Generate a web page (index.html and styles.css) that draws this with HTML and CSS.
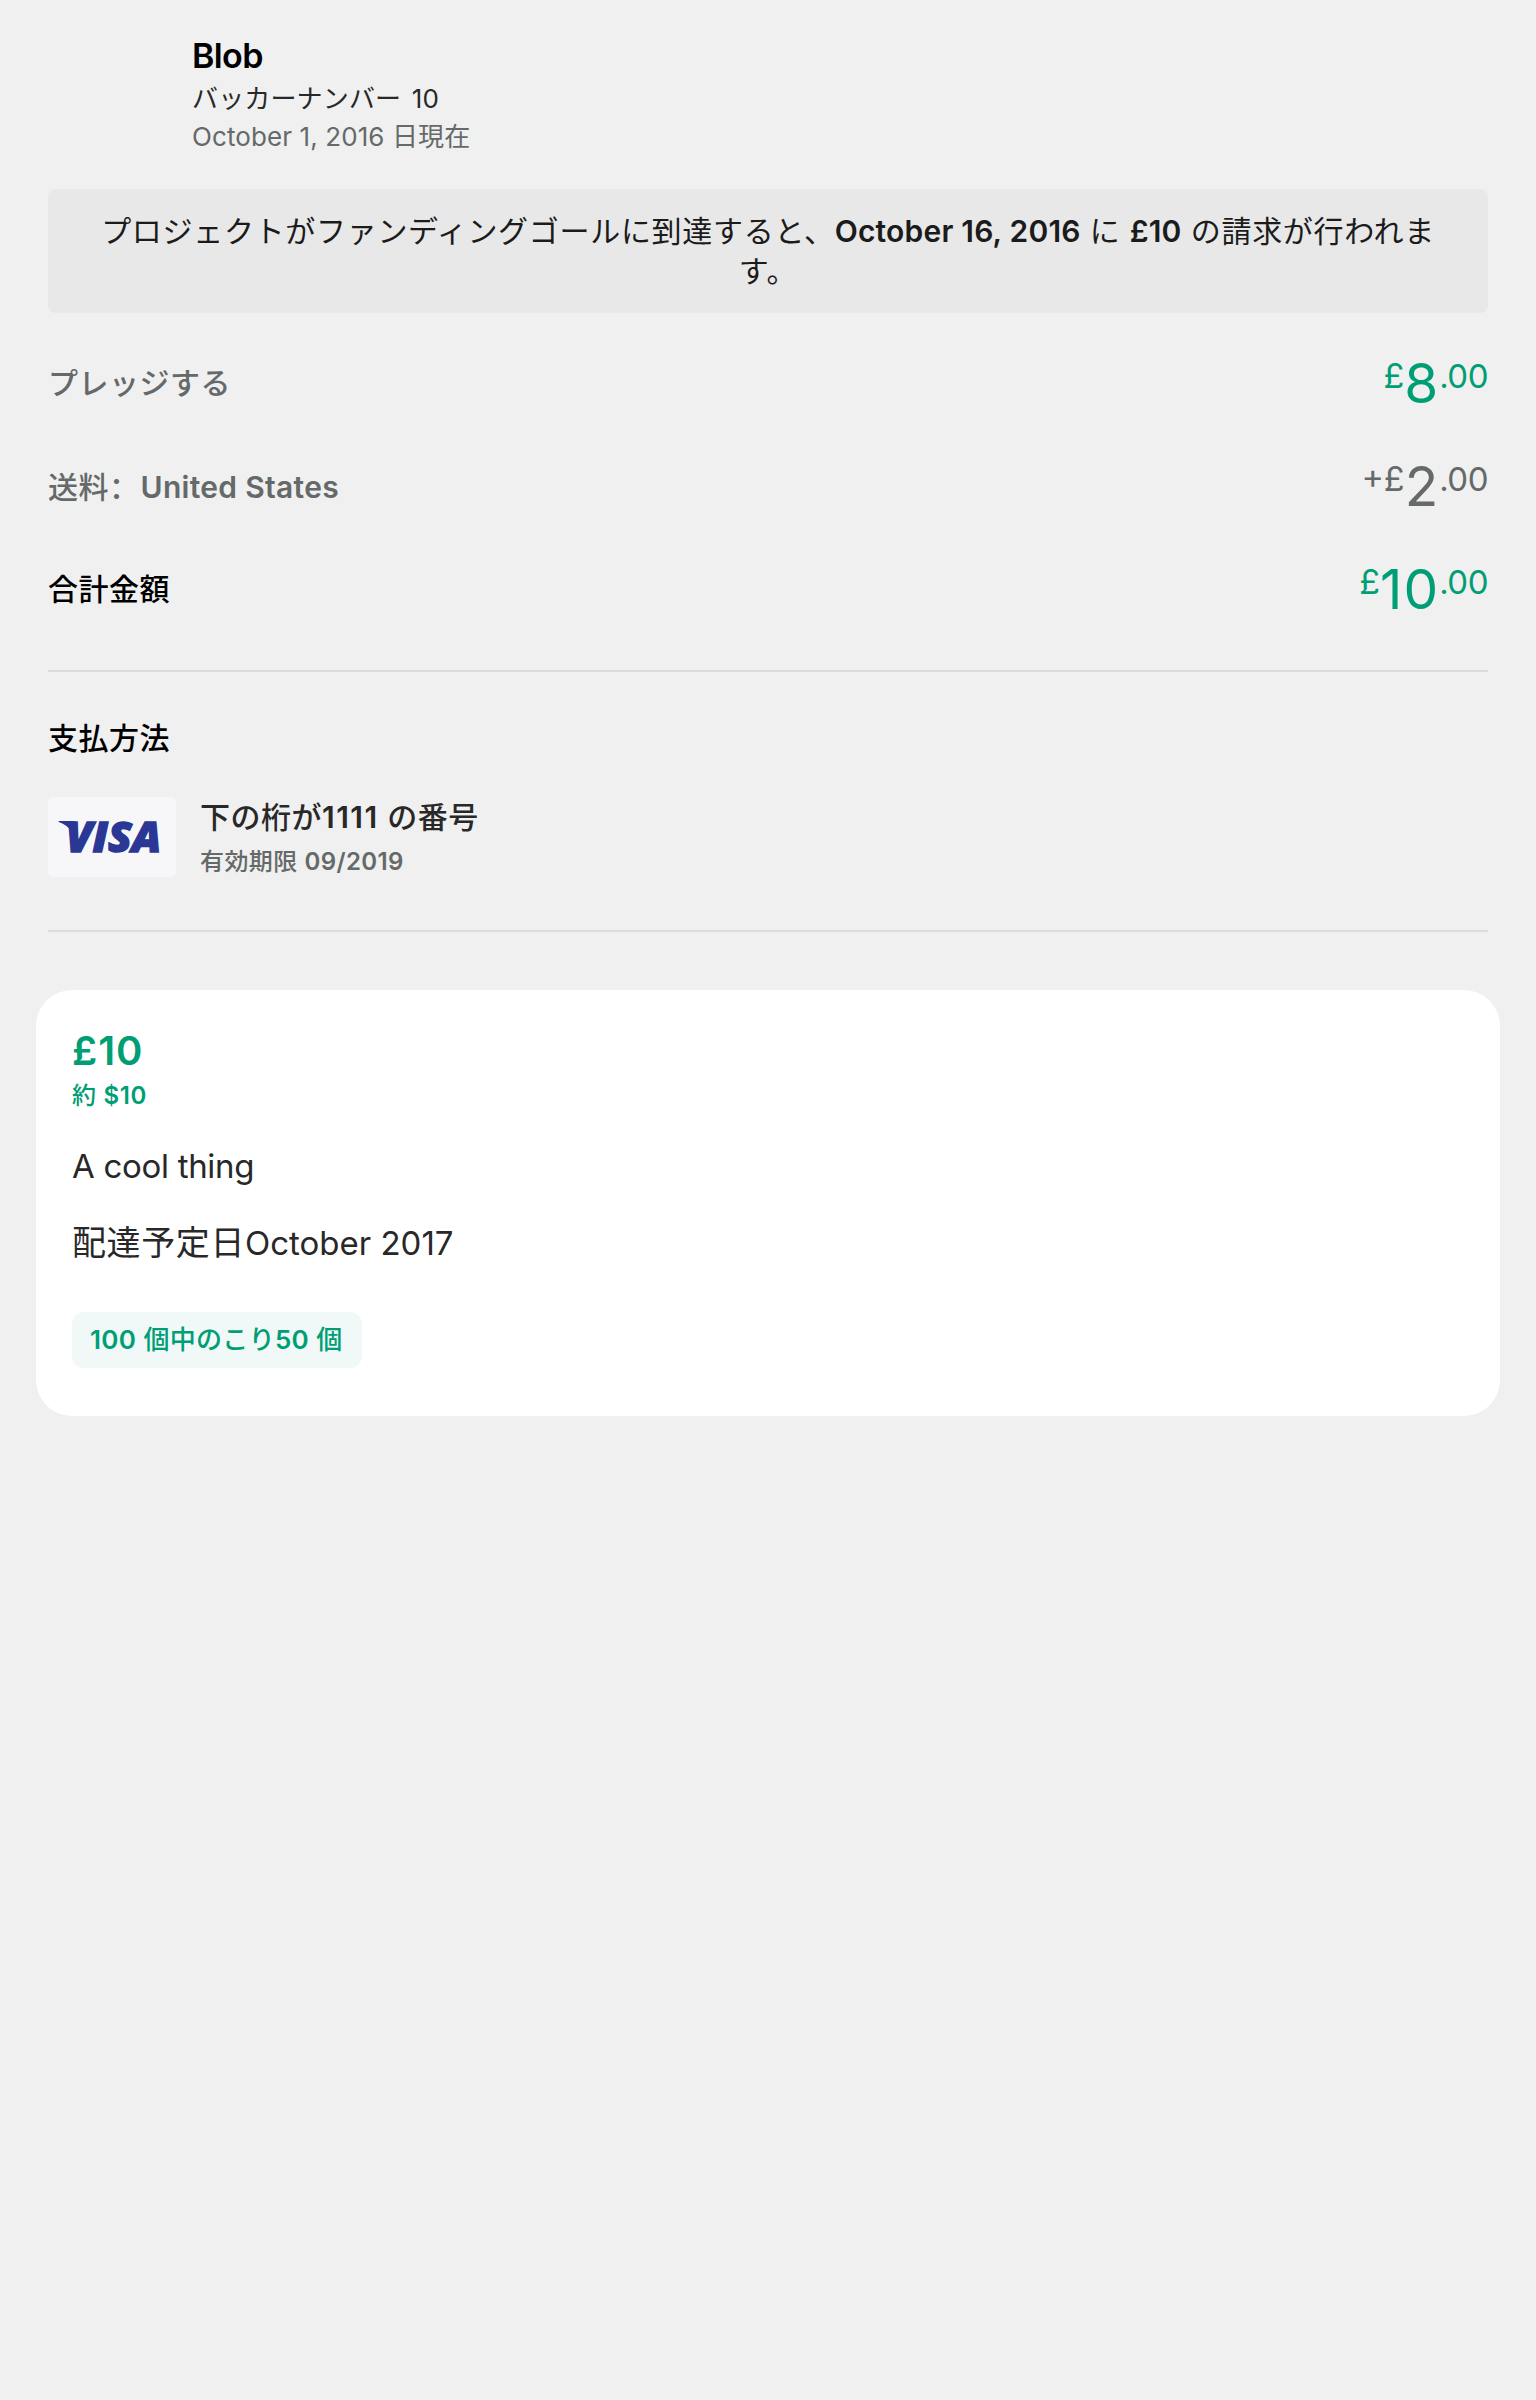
FILE: index.html
```html
<!DOCTYPE html>
<html lang="ja">
<head>
<meta charset="utf-8">
<title>Blob</title>
<link rel="stylesheet" href="styles.css">
</head>
<body>
<main class="page">
  <header class="backer">
    <h1 class="backer-name">Blob</h1>
    <p class="backer-number">バッカーナンバー <span class="en">10</span></p>
    <p class="backer-date"><span class="en">October 1, 2016</span> 日現在</p>
  </header>

  <p class="notice">プロジェクトがファンディングゴールに到達すると、<b class="en">October 16, 2016</b> に <b class="en">£10</b> の請求が行われます。</p>

  <section class="summary">
    <div class="row"><span class="label">プレッジする</span><span class="price"><span class="sup cur">£</span><span class="main">8</span><span class="sup">.00</span></span></div>
    <div class="row"><span class="label">送料<span class="colon" lang="zh-CN">：</span><b class="en">United States</b></span><span class="price muted"><span class="sup cur">+£</span><span class="main">2</span><span class="sup">.00</span></span></div>
    <div class="row"><span class="label total">合計金額</span><span class="price"><span class="sup cur">£</span><span class="main">10</span><span class="sup">.00</span></span></div>
  </section>

  <section class="payment">
    <h2 class="payment-title">支払方法</h2>
    <div class="card">
      <svg class="card-logo" viewBox="0 0 384 240" role="img" aria-label="VISA">
        <path class="logo-ink" d="M32 72H80L72 110C68 96 54 82 32 75Z"/>
        <text class="logo-text" x="53" y="165" textLength="287" lengthAdjust="spacingAndGlyphs">VISA</text>
      </svg>
      <div>
        <p class="card-number">下の桁が<b class="en">1111</b> の番号</p>
        <p class="card-expiry">有効期限 <span class="en">09/2019</span></p>
      </div>
    </div>
  </section>

  <article class="reward">
    <h2 class="reward-price">£10</h2>
    <p class="reward-conversion">約 <span class="en">$10</span></p>
    <p class="reward-title">A cool thing</p>
    <p class="reward-delivery">配達予定日<span class="en">October 2017</span></p>
    <span class="badge"><span class="en">100</span> 個中のこり<span class="en">50</span> 個</span>
  </article>
</main>
</body>
</html>
```
FILE: styles.css
```css
* { box-sizing: border-box; }
body {
  margin: 0;
  background: #f0f0f0;
  color: #282828;
  font-family: Inter, "Noto Sans CJK JP", sans-serif;
  text-spacing-trim: space-all;
}
h1, h2, p { margin: 0; }
b { font-weight: 600; }
.page { min-height: 2400px; padding: 36px 48px 0; }

.backer { padding-left: 144px; font-size: 26px; line-height: 38px; }
.backer-name { margin-bottom: 4px; color: #000; font-size: 34px; font-weight: 600; line-height: 40px; letter-spacing: -0.6px; }
.backer-number { word-spacing: 3px; letter-spacing: 0.15px; }
.backer-date { color: #656969; letter-spacing: 0.1px; }

.notice {
  margin-top: 33px;
  padding: 22px 40px;
  border-radius: 8px;
  background: #e8e8e8;
  color: #1b1b1b;
  font-size: 30px;
  line-height: 40px;
  letter-spacing: 0.7px;
  text-align: center;
}
.notice .en { letter-spacing: 0.2px; }

.summary { margin-top: 18px; padding-bottom: 30px; border-bottom: 2px solid #dcdcdc; }
.row { display: flex; align-items: center; justify-content: space-between; height: 103px; }
.label { color: #656969; font-size: 30px; font-weight: 500; line-height: 40px; letter-spacing: 0.5px; }
.label .en { margin-left: 1px; letter-spacing: 0.3px; }
.colon { font-family: "Noto Sans CJK SC", sans-serif; }
.total { color: #000; }
.price { color: #009e74; font-size: 55px; line-height: 56px; letter-spacing: 1px; }
.price.muted { color: #656969; }
.sup { font-size: 33px; line-height: 1; vertical-align: 15px; letter-spacing: -0.5px; }
.cur { font-size: 34px; letter-spacing: 0; }

.payment { padding: 46px 0 53px; border-bottom: 2px solid #dcdcdc; }
.payment-title { color: #000; font-size: 30px; font-weight: 500; line-height: 40px; letter-spacing: 0.5px; }
.card { display: flex; gap: 24px; height: 80px; margin-top: 39px; }
.card-logo { width: 128px; height: 80px; border-radius: 6px; background: #f7f7fa; }
.logo-ink { fill: #2a3795; }
.logo-text { fill: #2a3795; stroke: #2a3795; stroke-width: 4px; font: italic 800 127px "Open Sans", sans-serif; }
.card-number { font-size: 30px; font-weight: 500; line-height: 40px; letter-spacing: 0.5px; }
.card-number .en { letter-spacing: 1.5px; }
.card-expiry { margin-top: 10px; color: #656969; font-size: 24px; font-weight: 500; line-height: 30px; letter-spacing: 0.4px; }
.card-expiry .en { font-weight: 600; }

.reward { margin: 58px -12px 0; padding: 37px 36px 48px; border-radius: 36px; background: #fff; }
.reward-price { color: #009e74; font-size: 40px; font-weight: 600; line-height: 48px; letter-spacing: 1px; }
.reward-conversion { margin-top: 6px; color: #009e74; font-size: 24px; font-weight: 500; line-height: 30px; letter-spacing: 0.6px; }
.reward-conversion .en { font-weight: 600; }
.reward-title { margin-top: 33px; font-size: 33px; line-height: 44px; letter-spacing: -0.3px; }
.reward-delivery { margin-top: 33px; font-size: 34px; line-height: 44px; letter-spacing: 0.6px; }
.reward-delivery .en { font-size: 33px; letter-spacing: 0; }
.badge {
  display: block;
  width: fit-content;
  margin-top: 47px;
  padding: 0 19px 0 18px;
  border-radius: 12px;
  background: #f0f9f8;
  color: #009e74;
  font-size: 26px;
  font-weight: 500;
  line-height: 56px;
  letter-spacing: 0.3px;
}
.badge .en { font-weight: 600; }
```
